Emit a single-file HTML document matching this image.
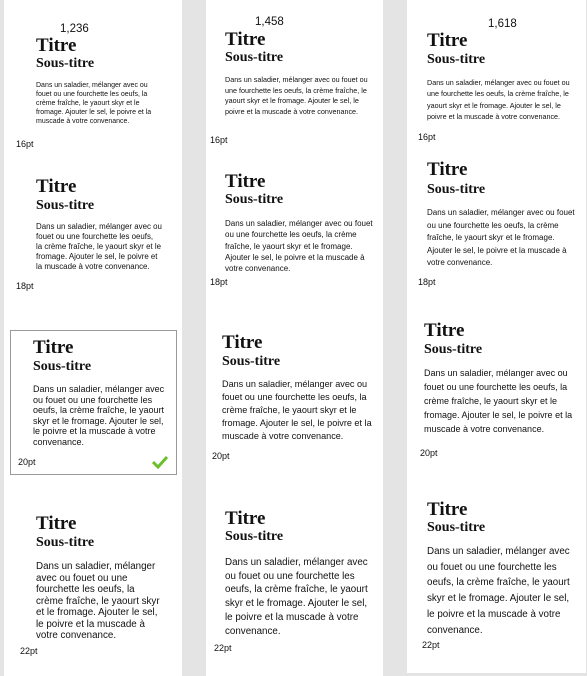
<!DOCTYPE html>
<html><head><meta charset="utf-8"><style>
body{margin:0;width:587px;height:676px;background:#e4e4e4;position:relative;overflow:hidden;font-family:"Liberation Sans",sans-serif;color:#111}
.col{position:absolute;top:0;height:676px;background:#fff}
.a{position:absolute;white-space:nowrap}
.t{font-family:"Liberation Serif",serif;font-weight:bold;line-height:1}
.s{font-family:"Liberation Serif",serif;font-weight:bold;line-height:1}
.l{font-size:9px;line-height:10px}
.n{font-size:11.5px;line-height:14px}
</style></head><body>
<div class="col" style="left:4px;width:178px"></div>
<div class="col" style="left:206px;width:177px"></div>
<div class="col" style="left:407px;width:179px;height:673px"></div>
<div class="a" style="left:10px;top:330px;width:165px;height:143px;border:1px solid #999"></div>
<svg class="a" style="left:151px;top:454px" width="18" height="15" viewBox="0 0 18 15"><path d="M2 8 L7 13 L16 3" fill="none" stroke="#6bbf2a" stroke-width="3"/></svg>

<!-- col1 -->
<div class="a n" style="left:60px;top:22px">1,236</div>
<div class="a t" style="left:36px;top:36px;font-size:19px">Titre</div>
<div class="a s" style="left:36px;top:57px;font-size:14px">Sous-titre</div>
<div class="a" style="left:36px;top:81px;font-size:7px;line-height:9px">Dans un saladier, mélanger avec ou<br>fouet ou une fourchette les oeufs, la<br>crème fraîche, le yaourt skyr et le<br>fromage. Ajouter le sel, le poivre et la<br>muscade à votre convenance.</div>
<div class="a l" style="left:16px;top:139px">16pt</div>

<div class="a t" style="left:36px;top:177px;font-size:19px">Titre</div>
<div class="a s" style="left:36px;top:199px;font-size:14px">Sous-titre</div>
<div class="a" style="left:36px;top:222px;font-size:7.9px;line-height:10px">Dans un saladier, mélanger avec ou<br>fouet ou une fourchette les oeufs,<br>la crème fraîche, le yaourt skyr et le<br>fromage. Ajouter le sel, le poivre et<br>la muscade à votre convenance.</div>
<div class="a l" style="left:16px;top:281px">18pt</div>

<div class="a t" style="left:33px;top:338px;font-size:19px">Titre</div>
<div class="a s" style="left:33px;top:360px;font-size:14px">Sous-titre</div>
<div class="a" style="left:33px;top:384px;font-size:9px;line-height:10.6px">Dans un saladier, mélanger avec<br>ou fouet ou une fourchette les<br>oeufs, la crème fraîche, le yaourt<br>skyr et le fromage. Ajouter le sel,<br>le poivre et la muscade à votre<br>convenance.</div>
<div class="a l" style="left:18px;top:457px">20pt</div>

<div class="a t" style="left:36px;top:514px;font-size:19px">Titre</div>
<div class="a s" style="left:36px;top:536px;font-size:14px">Sous-titre</div>
<div class="a" style="left:36px;top:561px;font-size:9.8px;line-height:11.5px">Dans un saladier, mélanger<br>avec ou fouet ou une<br>fourchette les oeufs, la<br>crème fraîche, le yaourt skyr<br>et le fromage. Ajouter le sel,<br>le poivre et la muscade à<br>votre convenance.</div>
<div class="a l" style="left:20px;top:646px">22pt</div>

<!-- col2 -->
<div class="a n" style="left:255px;top:15px">1,458</div>
<div class="a t" style="left:225px;top:30px;font-size:19px">Titre</div>
<div class="a s" style="left:225px;top:51px;font-size:14px">Sous-titre</div>
<div class="a" style="left:225px;top:75px;font-size:7.2px;line-height:10.5px">Dans un saladier, mélanger avec ou fouet ou<br>une fourchette les oeufs, la crème fraîche, le<br>yaourt skyr et le fromage. Ajouter le sel, le<br>poivre et la muscade à votre convenance.</div>
<div class="a l" style="left:210px;top:135px">16pt</div>

<div class="a t" style="left:225px;top:172px;font-size:19px">Titre</div>
<div class="a s" style="left:225px;top:193px;font-size:14px">Sous-titre</div>
<div class="a" style="left:225px;top:218px;font-size:8px;line-height:11.3px">Dans un saladier, mélanger avec ou fouet<br>ou une fourchette les oeufs, la crème<br>fraîche, le yaourt skyr et le fromage.<br>Ajouter le sel, le poivre et la muscade à<br>votre convenance.</div>
<div class="a l" style="left:210px;top:277px">18pt</div>

<div class="a t" style="left:222px;top:333px;font-size:19px">Titre</div>
<div class="a s" style="left:222px;top:355px;font-size:14px">Sous-titre</div>
<div class="a" style="left:222px;top:378px;font-size:9.1px;line-height:13px">Dans un saladier, mélanger avec ou<br>fouet ou une fourchette les oeufs, la<br>crème fraîche, le yaourt skyr et le<br>fromage. Ajouter le sel, le poivre et la<br>muscade à votre convenance.</div>
<div class="a l" style="left:212px;top:451px">20pt</div>

<div class="a t" style="left:225px;top:509px;font-size:19px">Titre</div>
<div class="a s" style="left:225px;top:530px;font-size:14px">Sous-titre</div>
<div class="a" style="left:225px;top:556px;font-size:9.8px;line-height:13.7px">Dans un saladier, mélanger avec<br>ou fouet ou une fourchette les<br>oeufs, la crème fraîche, le yaourt<br>skyr et le fromage. Ajouter le sel,<br>le poivre et la muscade à votre<br>convenance.</div>
<div class="a l" style="left:214px;top:643px">22pt</div>

<!-- col3 -->
<div class="a n" style="left:488px;top:17px">1,618</div>
<div class="a t" style="left:427px;top:31px;font-size:19px">Titre</div>
<div class="a s" style="left:427px;top:53px;font-size:14px">Sous-titre</div>
<div class="a" style="left:427px;top:77px;font-size:7.2px;line-height:11.3px">Dans un saladier, mélanger avec ou fouet ou<br>une fourchette les oeufs, la crème fraîche, le<br>yaourt skyr et le fromage. Ajouter le sel, le<br>poivre et la muscade à votre convenance.</div>
<div class="a l" style="left:418px;top:132px">16pt</div>

<div class="a t" style="left:427px;top:160px;font-size:19px">Titre</div>
<div class="a s" style="left:427px;top:183px;font-size:14px">Sous-titre</div>
<div class="a" style="left:427px;top:207px;font-size:8px;line-height:12.6px">Dans un saladier, mélanger avec ou fouet<br>ou une fourchette les oeufs, la crème<br>fraîche, le yaourt skyr et le fromage.<br>Ajouter le sel, le poivre et la muscade à<br>votre convenance.</div>
<div class="a l" style="left:418px;top:277px">18pt</div>

<div class="a t" style="left:424px;top:321px;font-size:19px">Titre</div>
<div class="a s" style="left:424px;top:343px;font-size:14px">Sous-titre</div>
<div class="a" style="left:424px;top:366px;font-size:9px;line-height:14px">Dans un saladier, mélanger avec ou<br>fouet ou une fourchette les oeufs, la<br>crème fraîche, le yaourt skyr et le<br>fromage. Ajouter le sel, le poivre et la<br>muscade à votre convenance.</div>
<div class="a l" style="left:420px;top:448px">20pt</div>

<div class="a t" style="left:427px;top:500px;font-size:19px">Titre</div>
<div class="a s" style="left:427px;top:521px;font-size:14px">Sous-titre</div>
<div class="a" style="left:427px;top:544px;font-size:9.8px;line-height:15.7px">Dans un saladier, mélanger avec<br>ou fouet ou une fourchette les<br>oeufs, la crème fraîche, le yaourt<br>skyr et le fromage. Ajouter le sel,<br>le poivre et la muscade à votre<br>convenance.</div>
<div class="a l" style="left:422px;top:640px">22pt</div>
</body></html>
